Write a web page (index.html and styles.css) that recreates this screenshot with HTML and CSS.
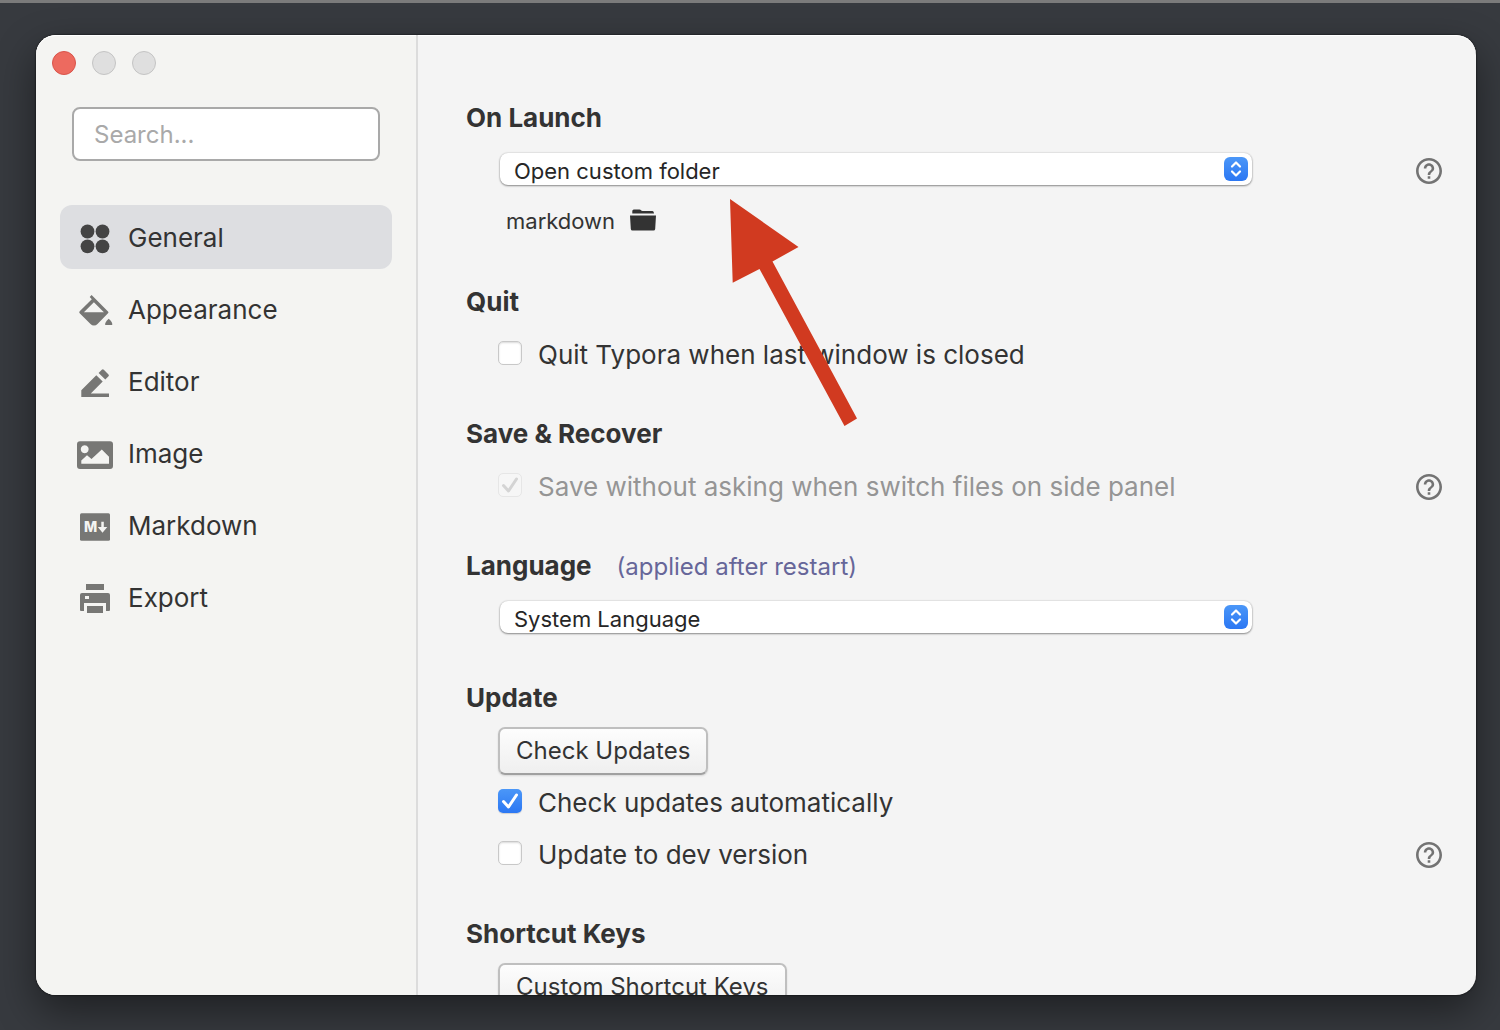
FILE: index.html
```html
<!DOCTYPE html>
<html lang="en">
<head>
<meta charset="utf-8">
<title>Preferences</title>
<link rel="stylesheet" href="styles.css">
</head>
<body>
<svg class="symbols" aria-hidden="true">
  <symbol id="help" viewBox="2 2 20 20"><path d="M11 18h2v-2h-2v2zm1-16C6.480 2 2 6.480 2 12s4.480 10 10 10 10-4.480 10-10S17.520 2 12 2zm0 18c-4.410 0-8-3.590-8-8s3.590-8 8-8 8 3.590 8 8-3.590 8-8 8zm0-14c-2.210 0-4 1.790-4 4h2c0-1.100.9-2 2-2s2 .9 2 2c0 2-3 1.750-3 5h2c0-2.250 3-2.500 3-5 0-2.210-1.790-4-4-4z"/></symbol>
  <symbol id="stepper" viewBox="0 0 24 24"><path d="M8 9.500 12 5.500 16 9.500M8 14.500 12 18.500 16 14.500" fill="none" stroke="#fff" stroke-width="2.200" stroke-linecap="round" stroke-linejoin="round"/></symbol>
</svg>
<div class="window">
  <aside class="sidebar">
    <div class="lights">
      <button class="light light-close" aria-label="Close"></button>
      <button class="light" aria-label="Minimize" disabled></button>
      <button class="light" aria-label="Zoom" disabled></button>
    </div>
    <input class="search" type="search" placeholder="Search..." aria-label="Search">
    <nav class="nav">
      <a class="nav-item active" href="#general">
        <svg class="nav-icon" viewBox="0 0 36 36"><circle cx="10.500" cy="12.500" r="6.900"/><circle cx="25.500" cy="12.500" r="6.900"/><circle cx="10.500" cy="27.300" r="6.900"/><circle cx="25.500" cy="27.300" r="6.900"/></svg>
        General</a>
      <a class="nav-item" href="#appearance">
        <svg class="nav-icon" viewBox="0 0 36 36"><path fill-rule="evenodd" d="M14.600 4 31 20.400Q32 21.300 31 22.200L20.500 33Q19 34.500 17 34.500T13.500 33L2.700 22.300Q1.700 21.300 2.700 20.300L14.800 8.200 12.700 6zM16.900 11.300 6.900 21.300H26.900z"/><path d="M31.700 27.700Q36 31.500 35.200 34H28.200Q27.500 31.500 31.700 27.700z"/></svg>
        Appearance</a>
      <a class="nav-item" href="#editor">
        <svg class="nav-icon" viewBox="0 0 36 36"><path d="M4.300 34V27.300L19.300 12.300 25.700 18.500 13.800 30.500H32V34zM21.600 10 24.800 6.800Q25.800 5.800 26.800 6.800L31.500 11.500Q32.400 12.400 31.500 13.300L28.300 16.400z"/></svg>
        Editor</a>
      <a class="nav-item" href="#image">
        <svg class="nav-icon" viewBox="0 0 36 36"><path fill-rule="evenodd" d="M3 6.300H33a3 3 0 0 1 3 3V31a3 3 0 0 1-3 3H3a3 3 0 0 1-3-3V9.300a3 3 0 0 1 3-3zM7.700 10.300a4 4 0 1 0 .01 0zM4.300 28.800H32V21.700L24.800 14.500 14.500 24 10 20.300 4.300 25.500z"/></svg>
        Image</a>
      <a class="nav-item" href="#markdown">
        <svg class="nav-icon" viewBox="0 0 36 36"><rect x="3" y="6.300" width="30" height="27.500" rx="1.500"/><text class="mark" x="7" y="25">M</text><path class="mark" d="M24.300 14.700H26.800V20H30.300L25.500 25.700 20.800 20H24.300z"/></svg>
        Markdown</a>
      <a class="nav-item" href="#export">
        <svg class="nav-icon" viewBox="0 0 36 36"><path fill-rule="evenodd" d="M9 5H27V11H9zM5 14H31a2 2 0 0 1 2 2V31a1 1 0 0 1-1 1H29V24H7V32H4a1 1 0 0 1-1-1V16a2 2 0 0 1 2-2zM8 17V20H12V17zM10 27H26V34H10z"/></svg>
        Export</a>
    </nav>
  </aside>
  <main class="content">
    <section class="section">
      <h2 class="heading">On Launch</h2>
      <div class="row">
        <span class="picker"><select class="select" aria-label="On Launch"><option>Open custom folder</option></select><svg class="stepper"><use href="#stepper"/></svg></span>
        <button class="help" aria-label="Help"><svg><use href="#help"/></svg></button>
      </div>
      <div class="row folder-row">
        <span class="folder">markdown
          <button class="folder-button" aria-label="Choose folder"><svg viewBox="0 0 26 22"><path d="M2.300 4.500V2Q2.300.5 3.800.5H9.500Q10.500.5 11 1.200T12.500 2H22.500Q24 2 24 4.500zM0 6.500H26L25.200 20Q25 21.500 23.500 21.500H2.500Q1 21.500.8 20z"/></svg></button></span>
      </div>
    </section>
    <section class="section">
      <h2 class="heading">Quit</h2>
      <div class="row"><label class="check"><input type="checkbox">Quit Typora when last window is closed</label></div>
    </section>
    <section class="section">
      <h2 class="heading">Save &amp; Recover</h2>
      <div class="row">
        <label class="check muted"><input type="checkbox" checked disabled>Save without asking when switch files on side panel</label>
        <button class="help" aria-label="Help"><svg><use href="#help"/></svg></button>
      </div>
    </section>
    <section class="section">
      <h2 class="heading">Language <small class="note">(applied after restart)</small></h2>
      <div class="row">
        <span class="picker"><select class="select" aria-label="Language"><option>System Language</option></select><svg class="stepper"><use href="#stepper"/></svg></span>
      </div>
    </section>
    <section class="section">
      <h2 class="heading">Update</h2>
      <div class="row"><button class="button">Check Updates</button></div>
      <div class="row"><label class="check"><input type="checkbox" checked>Check updates automatically</label></div>
      <div class="row">
        <label class="check"><input type="checkbox">Update to dev version</label>
        <button class="help" aria-label="Help"><svg><use href="#help"/></svg></button>
      </div>
    </section>
    <section class="section">
      <h2 class="heading">Shortcut Keys</h2>
      <div class="row"><button class="button">Custom Shortcut Keys</button></div>
    </section>
  </main>
  <svg class="arrow" viewBox="730 199 128 228" aria-hidden="true"><path d="M730 199 798.500 247 772.500 261.500 857 418.500 844.500 426 759.500 269 732.700 282.700z"/></svg>
</div>
</body>
</html>
```
FILE: styles.css
```css
* { box-sizing: border-box; }

body {
  margin: 0;
  height: 100vh;
  padding: 32px 24px 35px 36px;
  border-top: 3px solid #7b7b7b;
  background: #373a3f;
  color: #333;
  font: 26px/32px Inter, "Liberation Sans", sans-serif;
  overflow: hidden;
}

button, input, select { font: inherit; color: inherit; }
button { padding: 0; border: 0; background: none; }
.symbols { display: none; }

.window {
  position: relative;
  display: flex;
  height: 100%;
  border-radius: 20px;
  background: #f4f4f4;
  box-shadow: 0 0 2px #000, 0 16px 40px rgba(0, 0, 0, .45);
}

/* Sidebar */
.sidebar {
  flex: 0 0 382px;
  padding: 16px 24px;
  border-right: 2px solid #dcdcdc;
  border-radius: 20px 0 0 20px;
  background: #f4f4f2;
  box-shadow: inset 0 1px #fff;
}
.lights { display: flex; gap: 16px; margin-left: -8px; }
.light {
  width: 24px;
  height: 24px;
  border: 1px solid #c4c4c4;
  border-radius: 50%;
  background: #dfdfdf;
}
.light-close { border-color: #d9534a; background: #ed6a5f; }

.search {
  display: block;
  width: calc(100% - 24px);
  height: 54px;
  margin: 32px 12px 44px;
  padding: 0 20px;
  border: 2px solid #a9a9a9;
  border-radius: 8px;
  background: #fff;
  font-size: 24px;
  appearance: none;
}
.search::placeholder { color: #a9a9a9; }

.nav { display: flex; flex-direction: column; gap: 8px; }
.nav-item {
  display: flex;
  align-items: center;
  gap: 15px;
  height: 64px;
  padding: 2px 17px 0;
  border-radius: 12px;
  color: #333;
  text-decoration: none;
}
.nav-item.active { background: #dddee1; }
.nav-icon { width: 36px; height: 36px; margin-bottom: 2px; fill: #777775; }
.active .nav-icon { fill: #444; }
.nav-icon .mark { fill: #f4f4f2; font-size: 14px; font-weight: 800; }

/* Preference sections */
.content {
  flex: 1;
  display: flex;
  flex-direction: column;
  gap: 28px;
  padding: 57px 34px 0 48px;
  border-radius: 0 20px 20px 0;
  box-shadow: inset 0 1px #fff;
  overflow: hidden;
}
.heading {
  display: flex;
  align-items: center;
  gap: 25px;
  height: 52px;
  margin: 0;
  font-size: 26px;
  font-weight: 700;
}
.note { padding-top: 2px; color: #666699; font-size: 24px; font-weight: 400; }
.row {
  display: grid;
  grid-template-columns: 1fr 190px;
  align-items: center;
  height: 52px;
  padding: 2px 0 0 32px;
}

.picker { position: relative; display: block; margin-bottom: 4px; padding-left: 2px; }
.select {
  display: block;
  width: 100%;
  height: 32px;
  padding: 2px 48px 0 14px;
  border: 0;
  border-radius: 8px;
  background: #fff;
  box-shadow: 0 1px 2px rgba(0, 0, 0, .4), 0 0 2px rgba(0, 0, 0, .2);
  color: #262626;
  font-size: 22px;
  appearance: none;
}
.stepper {
  position: absolute;
  top: 4px;
  right: 4px;
  width: 24px;
  height: 24px;
  border-radius: 6px;
  background: linear-gradient(#4b97f8, #2b77f3);
  pointer-events: none;
}

.help { justify-self: end; width: 27px; height: 26px; }
.help svg { display: block; width: 26px; height: 26px; margin-left: auto; fill: #737373; }

.folder {
  display: flex;
  align-items: center;
  gap: 15px;
  margin-bottom: 4px;
  padding-left: 8px;
  font-size: 22px;
}
.folder-button { width: 26px; height: 22px; margin-bottom: 2px; }
.folder-button svg { display: block; width: 26px; height: 22px; fill: #333; }

.check {
  display: flex;
  align-items: center;
  gap: 16px;
  white-space: nowrap;
}
.check input {
  flex: none;
  width: 24px;
  height: 24px;
  margin: 0 0 4px;
  border: 1px solid #c8c8c8;
  border-radius: 5px;
  background: #fff;
  box-shadow: inset 0 1px 2px rgba(0, 0, 0, .15);
  appearance: none;
}
.check input:checked {
  border: 0;
  background:
    url("data:image/svg+xml,%3Csvg xmlns='http://www.w3.org/2000/svg' viewBox='0 0 24 24'%3E%3Cpath d='M5.500 12.500 10.500 18 18.500 6' fill='none' stroke='white' stroke-width='3' stroke-linecap='round' stroke-linejoin='round'/%3E%3C/svg%3E"),
    linear-gradient(#4b97f8, #2b77f3);
  box-shadow: 0 1px 1px rgba(0, 0, 0, .15);
}
.check input:disabled {
  border: 1px solid #e6e6e6;
  background:
    url("data:image/svg+xml,%3Csvg xmlns='http://www.w3.org/2000/svg' viewBox='1 1 22 22'%3E%3Cpath d='M5.500 12.500 10.500 18 18.500 6' fill='none' stroke='%23d4d4d4' stroke-width='3' stroke-linecap='round' stroke-linejoin='round'/%3E%3C/svg%3E")
    #f6f6f6;
  box-shadow: none;
}
.muted { color: #959595; }

.button {
  justify-self: start;
  height: 48px;
  padding: 0 16px;
  border: 2px solid #bfbfbf;
  border-bottom-color: #a0a0a0;
  border-radius: 7px;
  background: linear-gradient(#fdfdfd, #efefef);
  box-shadow: 0 1px 2px rgba(0, 0, 0, .12);
  font-size: 24px;
  white-space: nowrap;
}

/* Callout drawn over the window */
.arrow {
  position: absolute;
  left: 694px;
  top: 164px;
  width: 128px;
  height: 228px;
  fill: #d13a20;
}
```
